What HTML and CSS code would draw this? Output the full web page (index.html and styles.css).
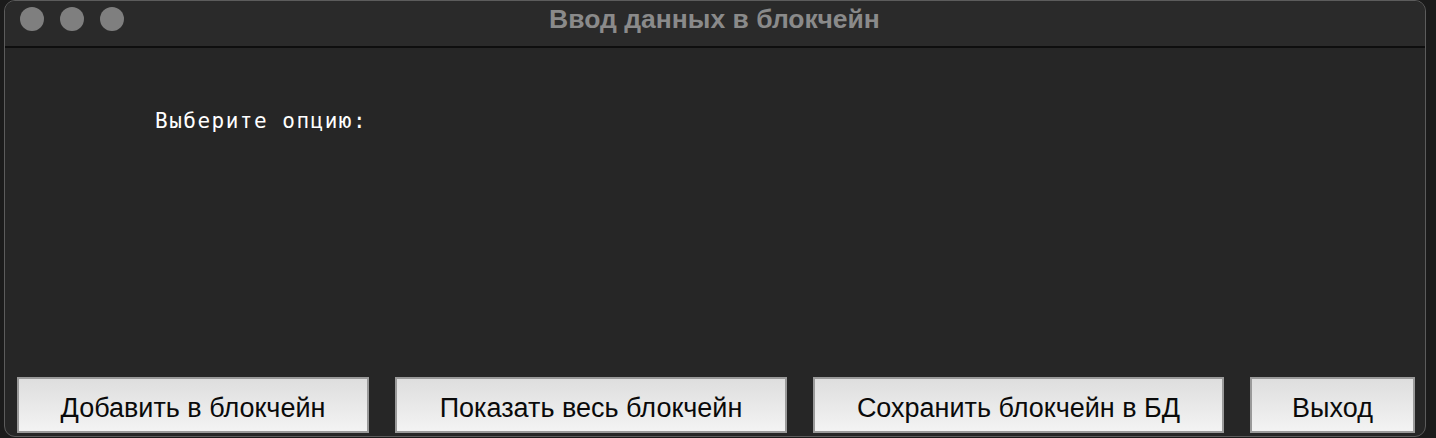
FILE: index.html
```html
<!DOCTYPE html>
<html lang="ru">
<head>
<meta charset="utf-8">
<title>Ввод данных в блокчейн</title>
<link rel="stylesheet" href="styles.css">
</head>
<body>
<div class="window">
  <div class="titlebar">
    <div class="lights">
      <span class="light"></span>
      <span class="light"></span>
      <span class="light"></span>
    </div>
    <div class="title">Ввод данных в блокчейн</div>
  </div>
  <div class="content">
    <div class="prompt">Выберите опцию:</div>
    <div class="buttons">
      <button class="btn btn-add">Добавить в блокчейн</button>
      <button class="btn btn-show">Показать весь блокчейн</button>
      <button class="btn btn-save">Сохранить блокчейн в БД</button>
      <button class="btn btn-exit">Выход</button>
    </div>
  </div>
</div>
</body>
</html>
```

FILE: styles.css
```css
html, body {
  margin: 0;
  padding: 0;
  background: #1b1b1b;
  width: 1436px;
  height: 438px;
  overflow: hidden;
}

.window {
  margin-left: 4px;
  width: 1420px;
  height: 435px;
  border: 1px solid #5c5c5c;
  border-radius: 11px;
  background: #262626;
  display: flex;
  flex-direction: column;
  overflow: hidden;
  box-sizing: content-box;
}

.titlebar {
  position: relative;
  height: 45px;
  background: #2a2a2a;
  border-bottom: 2px solid #0e0e0e;
  display: flex;
  align-items: center;
  justify-content: center;
  flex-shrink: 0;
}

.lights {
  position: absolute;
  left: 15px;
  top: 6px;
  display: flex;
  gap: 16px;
}

.light {
  width: 24px;
  height: 24px;
  border-radius: 50%;
  background: #7f7f7f;
}

.title {
  font-family: "Liberation Sans", Arial, sans-serif;
  font-weight: bold;
  font-size: 26.5px;
  color: #8a8a8a;
  margin-top: -8px;
  margin-left: -1px;
}

.content {
  flex: 1;
  display: flex;
  flex-direction: column;
  padding: 0 10px 3px 12px;
}

.prompt {
  font-family: "DejaVu Sans Mono", monospace;
  font-size: 21px;
  letter-spacing: 1.5px;
  color: #ffffff;
  margin-top: 61px;
  margin-left: 138px;
}

.buttons {
  margin-top: auto;
  display: flex;
  justify-content: space-between;
}

.btn {
  height: 56px;
  border: 2px solid #9a9a9a;
  border-radius: 0;
  background: linear-gradient(to bottom, #dedede, #f3f3f3);
  font-family: "Liberation Sans", Arial, sans-serif;
  font-size: 27px;
  color: #0a0a0a;
  padding: 0;
  display: flex;
  align-items: center;
  justify-content: center;
  padding-top: 6px;
  box-sizing: border-box;
}

.btn-add { width: 352px; }
.btn-show { width: 392px; }
.btn-save { width: 411px; }
.btn-exit { width: 165px; }
```
